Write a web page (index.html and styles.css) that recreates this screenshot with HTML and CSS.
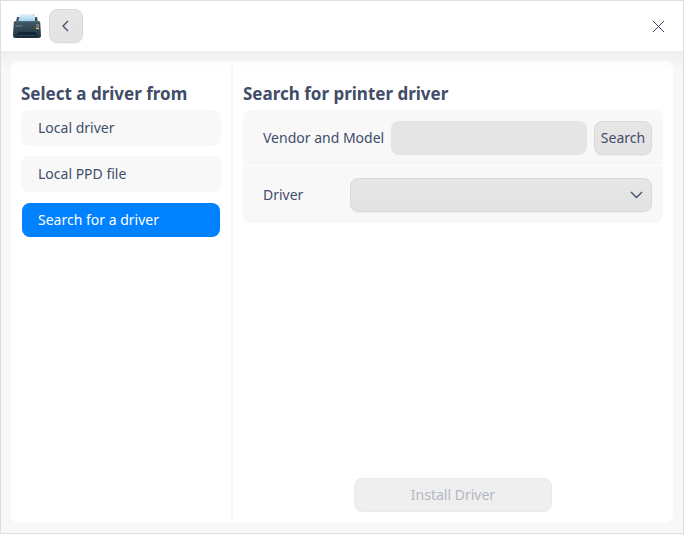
FILE: index.html
```html
<!DOCTYPE html>
<html lang="en">
<head>
<meta charset="utf-8">
<title>Printer driver</title>
<link rel="stylesheet" href="styles.css">
</head>
<body>
<div class="window">
  <header class="titlebar">
    <svg class="logo" width="28" height="26" viewBox="0 0 28 26">
      <defs>
        <linearGradient id="body" x1="0" y1="0" x2="0" y2="1"><stop offset="0" stop-color="#405a66"/><stop offset="1" stop-color="#1e3440"/></linearGradient>
        <linearGradient id="paper" x1="0" y1="0" x2="0" y2="1"><stop offset="0" stop-color="#e5f5fd"/><stop offset="1" stop-color="#9fd0ee"/></linearGradient>
      </defs>
      <path d="M4 4h20l1 5H3z" fill="#3c5360"/>
      <path d="M7 1h14l1 1.500V8H5.500z" fill="url(#paper)"/>
      <path d="M20 1l2 2h-2z" fill="#a9cee2"/>
      <path d="M2.500 8h23q1.500 0 1.700 1.500l.8 13q0 2.500-2.500 2.500h-23Q0 25 0 22.500l.8-13Q1 8 2.500 8z" fill="url(#body)"/>
      <path d="M2 8.500h24" stroke="#5b7480" stroke-width=".8"/>
      <path d="M2.500 13h7" stroke="#8395a0" stroke-width=".9" stroke-dasharray="2 .3"/>
      <path d="M5.500 19h17q1 0 1.500 5H4q.5-5 1.500-5z" fill="#122733"/>
      <path d="M5 22.500h18" stroke="#2c4350"/>
      <path d="M23.700 11v2" stroke="#cf5552" stroke-width="1.500"/>
      <path d="M25.200 11v2.500" stroke="#3a91cf" stroke-width="1.500"/>
      <path d="M23 14h3" stroke="#c27a52" stroke-width="1.200"/>
      <path d="M23 15.500h3" stroke="#e2c454" stroke-width="1.200"/>
    </svg>
    <button class="button back" aria-label="Back">
      <svg width="8" height="12" viewBox="0 0 8 12"><path d="M6 1L1 6l5 5" class="stroke"/></svg>
    </button>
    <button class="close" aria-label="Close">
      <svg width="11" height="11" viewBox="0 0 11 11"><path d="M0 0l11 11M11 0L0 11" class="stroke thin"/></svg>
    </button>
  </header>
  <main class="content">
    <div class="panel">
      <nav class="sidebar">
        <h2>Select a driver from</h2>
        <a class="item">Local driver</a>
        <a class="item">Local PPD file</a>
        <a class="item selected">Search for a driver</a>
      </nav>
      <section class="details">
        <h2>Search for printer driver</h2>
        <div class="card">
          <div class="row first">
            <span class="label">Vendor and Model</span>
            <input class="field" type="text" aria-label="Vendor and Model">
            <button class="button search">Search</button>
          </div>
          <div class="row second">
            <span class="label">Driver</span>
            <div class="button select">
              <svg width="13" height="8" viewBox="0 0 13 8"><path d="M1 1l5.500 5.500L12 1" class="stroke"/></svg>
            </div>
          </div>
        </div>
        <button class="button install" disabled>Install Driver</button>
      </section>
    </div>
  </main>
</div>
</body>
</html>
```
FILE: styles.css
```css
* { box-sizing: border-box; }
body { margin: 0; }
.window {
  width: 684px;
  height: 534px;
  border: 1px solid #dedede;
  background: #f8f8f8;
  display: flex;
  flex-direction: column;
  font: 14px/20px "Noto Sans", sans-serif;
  color: #414d68;
}
.titlebar {
  height: 50px;
  flex: none;
  display: flex;
  align-items: center;
  padding: 0 19px 0 12px;
  background: #fff;
}
.logo { margin-right: 8px; }
button { font: inherit; color: inherit; padding: 0; }
.button {
  border: 1px solid #dadada;
  border-radius: 8px;
  background: linear-gradient(#e6e6e6, #e3e3e3);
  display: flex;
  align-items: center;
  justify-content: center;
  height: 34px;
  box-shadow: 0 1px 1px rgba(0, 0, 0, .04);
}
.back { width: 34px; }
.close {
  margin-left: auto;
  border: 0;
  background: none;
  display: flex;
}
svg { display: block; }
.stroke { fill: none; stroke: #414d68; stroke-width: 1.3; }
.thin { stroke-width: 1; }
.content {
  flex: 1;
  display: flex;
  padding: 10px;
  background: linear-gradient(#efefef, #f8f8f8 20px);
}
.panel {
  flex: 1;
  display: flex;
  border-radius: 8px;
  background: linear-gradient(#fcfcfc, #fff 10px);
}
h2 {
  margin: 0;
  height: 28px;
  font-size: 17px;
  line-height: 24px;
  font-weight: 700;
  white-space: nowrap;
}
.sidebar {
  width: 222px;
  padding: 21px 12px 0 10px;
  border-right: 2px solid #f8f8f8;
}
.item {
  display: block;
  width: 200px;
  height: 36px;
  margin-bottom: 10px;
  padding-left: 17px;
  line-height: 36px;
  border-radius: 8px;
  background: #f8f8f8;
}
.selected {
  width: 198px;
  height: 34px;
  margin: 11px 1px 0;
  padding-left: 16px;
  line-height: 34px;
  background: #0081ff;
  color: #fff;
}
.details {
  flex: 1;
  display: flex;
  flex-direction: column;
  padding: 21px 10px 11px;
}
.card { display: grid; gap: 1px; }
.row {
  display: flex;
  align-items: center;
  padding: 0 11px 0 20px;
  background: #f8f8f8;
}
.first { border-radius: 8px 8px 0 0; height: 55px; }
.second { border-radius: 0 0 8px 8px; height: 57px; }
.label { white-space: nowrap; }
.field {
  width: 196px;
  height: 34px;
  margin-left: auto;
  border: 0;
  border-radius: 8px;
  background: #e5e5e5;
}
.search { width: 58px; margin-left: 7px; }
.select {
  width: 302px;
  margin-left: auto;
  justify-content: flex-end;
  padding-right: 8px;
}
.install {
  width: 198px;
  margin: auto auto 0;
  border-color: #eaeaea;
  background: #efefef;
  color: #b3b8c3;
  box-shadow: none;
}
```
